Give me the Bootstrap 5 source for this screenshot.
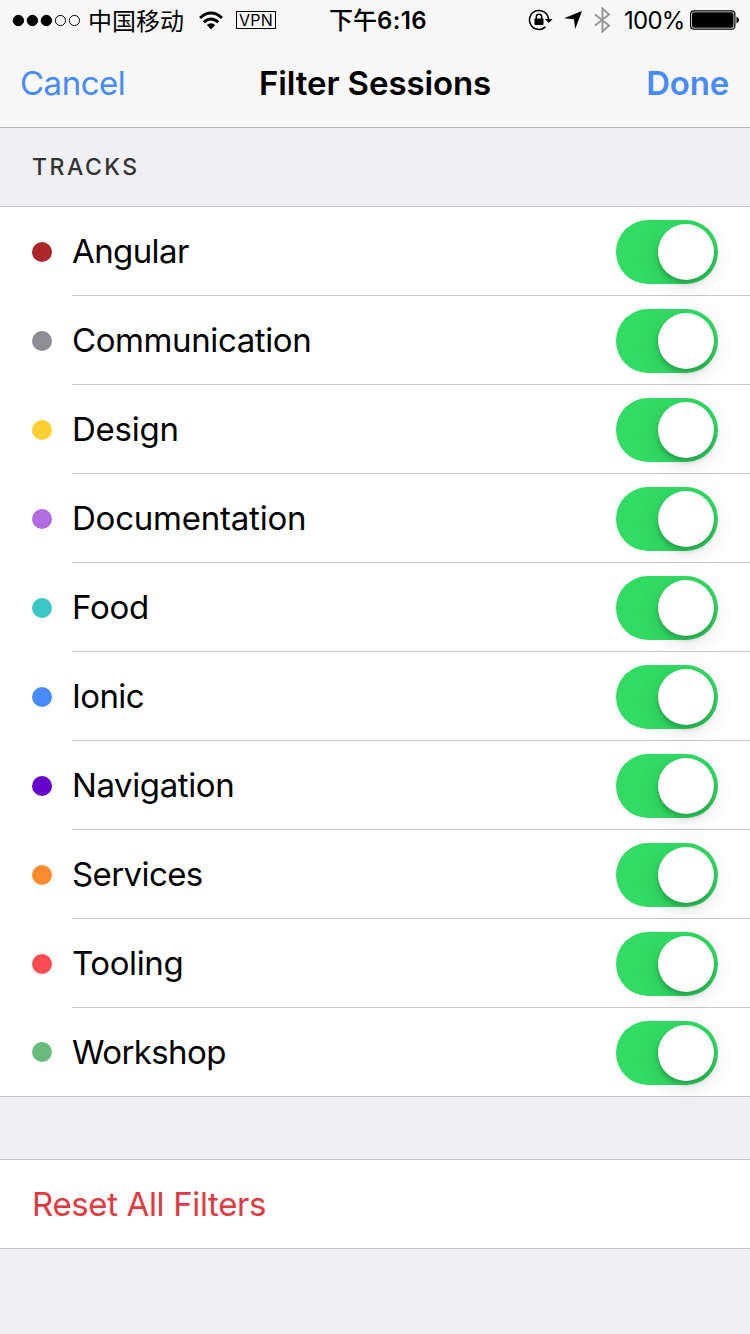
<!DOCTYPE html>
<html lang="en">
<head>
<meta charset="utf-8">
<meta name="viewport" content="width=device-width, initial-scale=1">
<title>Filter Sessions</title>
<link href="https://cdn.jsdelivr.net/npm/bootstrap@5.3.0/dist/css/bootstrap.min.css" rel="stylesheet">
<style>
  body { background: #efeff4; color: #000; font-family: Inter, "Noto Sans CJK SC", sans-serif; font-size: 33px; line-height: 1; overflow: hidden; }
  .top-chrome { background: #f7f7f8; border-bottom: 1px solid #b2b2b4; height: 128px; }
  .status-bar { height: 40px; font-size: 24px; padding: 0 11px 0 12px; }
  .status-bar svg { flex: none; }
  .status-side { width: 300px; }
  .carrier { font-size: 24px; margin-left: 7px; padding-top: 3px; width: 98px; }
  .wifi { margin-left: 13px; }
  .vpn-tag { width: 40px; height: 18px; border: 1px solid #000; font-size: 16px; letter-spacing: .3px; margin-left: 13px; }
  .clock { font-size: 24px; font-weight: 600; letter-spacing: .35px; padding: 1px 0 0 5px; }
  .clock span { font-weight: 500; letter-spacing: 0; }
  .percent { font-size: 24px; letter-spacing: -.75px; width: 61px; margin-left: 13px; padding-top: 2px; }
  .title-bar { height: 87px; padding: 0 21px 0 20px; }
  .title-bar .btn { font-size: 33px; line-height: 1; color: #488aff; letter-spacing: -.2px; }
  .title-bar .btn-cancel { letter-spacing: -.5px; }
  .title-bar h1 { font-size: 33px; font-weight: 600; letter-spacing: -.1px; }
  .section-head { height: 79px; padding-left: 32px; font-size: 23px; font-weight: 500; letter-spacing: 2.5px; color: #333; border-bottom: 1px solid #c8c7cc; }
  .track-row { height: 89px; padding-left: 32px; }
  .dot { width: 20px; height: 20px; margin: 1px 20px 0 0; border-radius: 50%; }
  .row-body { border-bottom: 1px solid #c8c7cc; padding: 1px 32px 0 0; letter-spacing: -.4px; }
  .snug { letter-spacing: -.6px; }
  .airy { letter-spacing: -.22px; }
  .tracks { border-bottom: 1px solid #c8c7cc; height: 890px; }
  .track-row:last-child .row-body { border-bottom: 0; padding-top: 0; }
  .track-row:last-child .dot { margin-top: -1px; }
  .toggle .form-check-input, .toggle .form-check-input:checked { float: none; display: block; width: 102px; height: 64px; margin: 1px 0 0; border: 0; border-radius: 32px; background: #32db64; }
  .toggle .form-check-input::before { content: ""; display: block; width: 56px; height: 56px; margin: 4px 0 0 42px; border-radius: 50%; background: #fff; box-shadow: 0 6px 24px rgba(0,0,0,.12), 0 4px 5px rgba(0,0,0,.2); }
  .reset-row { margin-top: 62px; height: 90px; padding: 0 32px; color: #e5393f; border: solid #c8c7cc; border-width: 1px 0; font-size: 33px; letter-spacing: -.36px; }
</style>
</head>
<body>
<header class="top-chrome">
  <div class="status-bar d-flex align-items-center justify-content-between">
    <div class="status-side d-flex align-items-center">
      <svg width="69" height="14" viewBox="0 0 69 14"><g stroke="#000"><circle cx="6.400" cy="7.500" r="5.200"/><circle cx="20.400" cy="7.500" r="5.200"/><circle cx="34.400" cy="7.500" r="5.200"/><circle cx="48.400" cy="7.500" r="5.100" fill="none"/><circle cx="62.400" cy="7.500" r="5.100" fill="none"/></g></svg>
      <span class="carrier text-nowrap">中国移动</span>
      <svg class="wifi" width="24" height="19" viewBox="0 0 24 19"><g fill="none" stroke="#000" stroke-width="2.900"><path d="M1 7Q12-2.800 23 7"/><path d="M4.800 11.200Q12 4.600 19.200 11.200"/></g><path d="M7.800 14Q12 10.500 16.200 14L12 18.500Z"/></svg>
      <span class="vpn-tag d-flex align-items-center justify-content-center">VPN</span>
    </div>
    <div class="clock text-nowrap"><span>下午</span>6:16</div>
    <div class="status-side d-flex align-items-center justify-content-end">
      <svg width="25" height="22" viewBox="0 0 25 22"><path d="M20.500 10.500A9.500 9.500 0 1 0 17.500 17.900" fill="none" stroke="#000" stroke-width="1.500"/><path d="M17 10h7.500l-3.700 4z"/><rect x="6.500" y="9.500" width="9" height="6.500" rx=".8"/><path d="M8.300 10V8a2.700 2.700 0 0 1 5.400 0v2" fill="none" stroke="#000" stroke-width="1.500"/></svg>
      <svg style="margin-left:11px" width="18" height="18" viewBox="0 0 18 18"><path d="M18 0 11.200 18 10 8.300 0 7.200Z"/></svg>
      <svg style="margin-left:12px" width="17" height="26" viewBox="0 0 17 26"><path d="M1 7.500 15 18.500 8.500 24.500V1.500L15 7.500 1 18.500" fill="none" stroke="#999" stroke-width="2"/></svg>
      <span class="percent">100%</span>
      <svg style="margin-left:5px" width="49" height="20" viewBox="0 0 49 20"><rect x=".6" y=".8" width="44.300" height="18.400" rx="3.500" fill="none" stroke="#000" stroke-width="1.200"/><rect x="2" y="2.200" width="41.500" height="15.600" rx="2"/><path d="M46.500 6.500Q49 7.500 49 10T46.500 13.500Z"/></svg>
    </div>
  </div>
  <div class="title-bar d-flex align-items-center justify-content-between position-relative">
    <button class="btn btn-cancel p-0 border-0">Cancel</button>
    <h1 class="m-0 position-absolute start-50 translate-middle-x text-nowrap">Filter Sessions</h1>
    <button class="btn p-0 border-0 fw-semibold">Done</button>
  </div>
</header>
<main>
  <div class="section-head d-flex align-items-center">TRACKS</div>
  <div class="tracks bg-white">
    <div class="track-row d-flex align-items-center"><span class="dot" style="background:#ac282b"></span><div class="row-body d-flex align-items-center justify-content-between flex-grow-1 h-100"><span class="snug">Angular</span><div class="toggle"><input class="form-check-input" type="checkbox" checked aria-label="Angular"></div></div></div>
    <div class="track-row d-flex align-items-center"><span class="dot" style="background:#8e8d93"></span><div class="row-body d-flex align-items-center justify-content-between flex-grow-1 h-100"><span>Communication</span><div class="toggle"><input class="form-check-input" type="checkbox" checked aria-label="Communication"></div></div></div>
    <div class="track-row d-flex align-items-center"><span class="dot" style="background:#fecf33"></span><div class="row-body d-flex align-items-center justify-content-between flex-grow-1 h-100"><span class="airy">Design</span><div class="toggle"><input class="form-check-input" type="checkbox" checked aria-label="Design"></div></div></div>
    <div class="track-row d-flex align-items-center"><span class="dot" style="background:#b16be3"></span><div class="row-body d-flex align-items-center justify-content-between flex-grow-1 h-100"><span class="airy">Documentation</span><div class="toggle"><input class="form-check-input" type="checkbox" checked aria-label="Documentation"></div></div></div>
    <div class="track-row d-flex align-items-center"><span class="dot" style="background:#3bc7c4"></span><div class="row-body d-flex align-items-center justify-content-between flex-grow-1 h-100"><span class="airy">Food</span><div class="toggle"><input class="form-check-input" type="checkbox" checked aria-label="Food"></div></div></div>
    <div class="track-row d-flex align-items-center"><span class="dot" style="background:#488aff"></span><div class="row-body d-flex align-items-center justify-content-between flex-grow-1 h-100"><span class="snug">Ionic</span><div class="toggle"><input class="form-check-input" type="checkbox" checked aria-label="Ionic"></div></div></div>
    <div class="track-row d-flex align-items-center"><span class="dot" style="background:#6600cc"></span><div class="row-body d-flex align-items-center justify-content-between flex-grow-1 h-100"><span>Navigation</span><div class="toggle"><input class="form-check-input" type="checkbox" checked aria-label="Navigation"></div></div></div>
    <div class="track-row d-flex align-items-center"><span class="dot" style="background:#fe8b2d"></span><div class="row-body d-flex align-items-center justify-content-between flex-grow-1 h-100"><span class="snug">Services</span><div class="toggle"><input class="form-check-input" type="checkbox" checked aria-label="Services"></div></div></div>
    <div class="track-row d-flex align-items-center"><span class="dot" style="background:#fe4c52"></span><div class="row-body d-flex align-items-center justify-content-between flex-grow-1 h-100"><span>Tooling</span><div class="toggle"><input class="form-check-input" type="checkbox" checked aria-label="Tooling"></div></div></div>
    <div class="track-row d-flex align-items-center"><span class="dot" style="background:#69bb7b"></span><div class="row-body d-flex align-items-center justify-content-between flex-grow-1 h-100"><span class="snug">Workshop</span><div class="toggle"><input class="form-check-input" type="checkbox" checked aria-label="Workshop"></div></div></div>
  </div>
  <div class="reset-row bg-white d-flex align-items-center">Reset All Filters</div>
</main>
<script src="https://cdn.jsdelivr.net/npm/bootstrap@5.3.0/dist/js/bootstrap.bundle.min.js"></script>
</body>
</html>
